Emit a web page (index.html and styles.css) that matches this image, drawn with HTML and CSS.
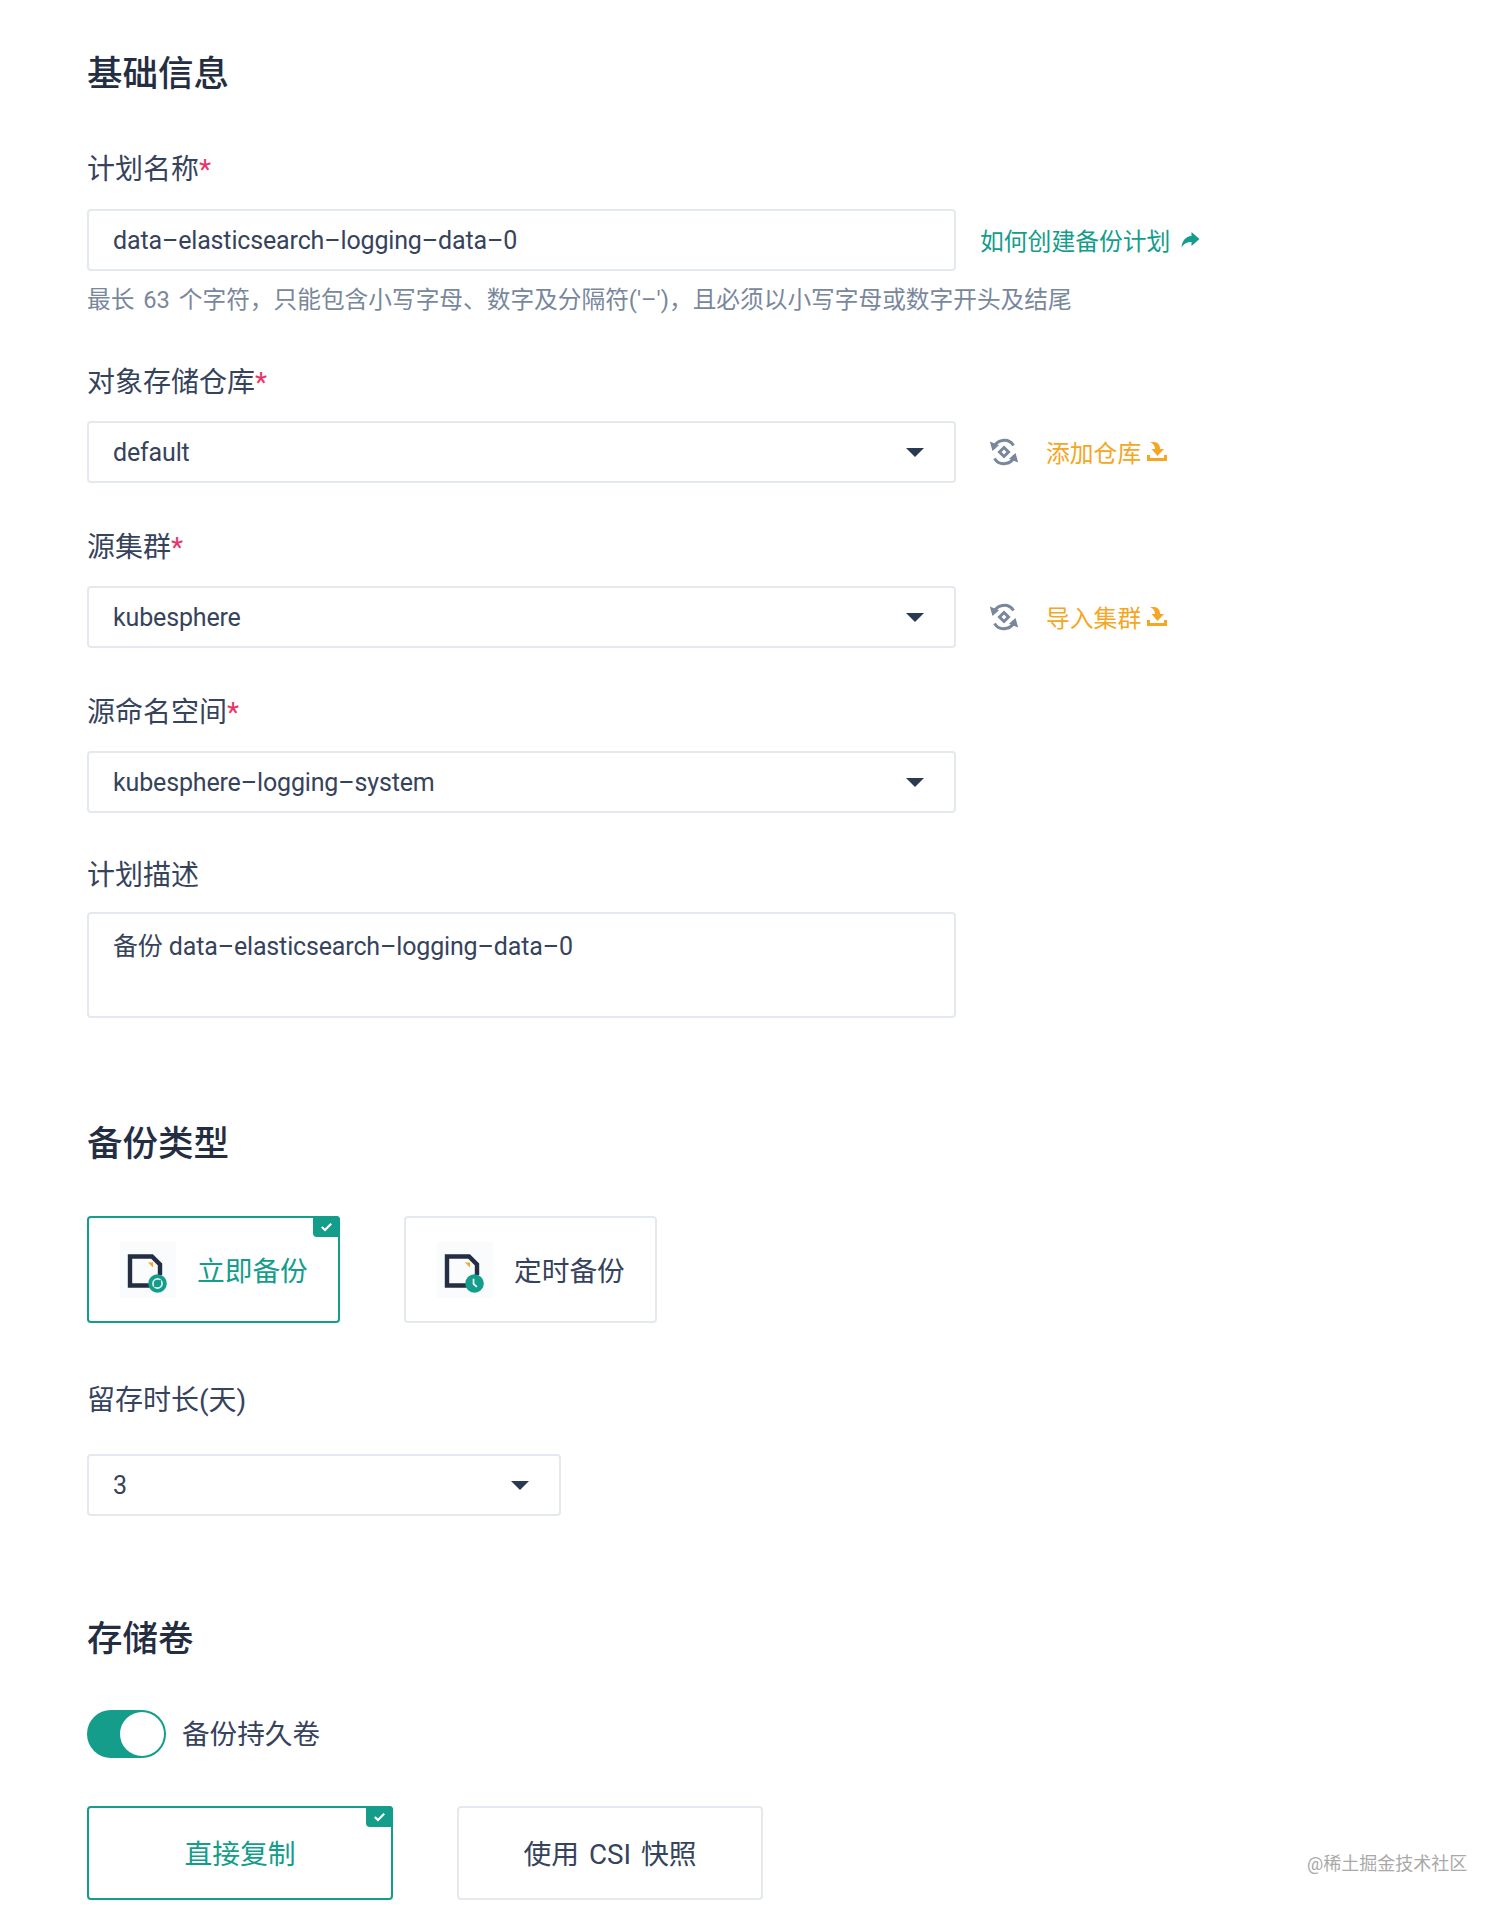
FILE: index.html
```html
<!DOCTYPE html>
<html lang="zh">
<head>
<meta charset="utf-8">
<title>备份计划</title>
<link rel="stylesheet" href="styles.css">
</head>
<body>
<svg class="defs" width="0" height="0" aria-hidden="true">
  <symbol id="i-refresh" viewBox="0 0 30 30">
    <path d="M4.500 11.500A11 11 0 0 1 24.500 8.500" fill="none" stroke="currentColor" stroke-width="3"/>
    <path d="M25.500 18.500A11 11 0 0 1 5.500 21.500" fill="none" stroke="currentColor" stroke-width="3"/>
    <path d="M.8 4.500 10 8.200 3.500 14Z" fill="currentColor"/>
    <path d="M29.200 25.500 20 21.800 26.500 16Z" fill="currentColor"/>
    <path d="M15 10.500 19.500 15 15 19.500 10.500 15Z" fill="none" stroke="currentColor" stroke-width="3"/>
  </symbol>
  <symbol id="i-down" viewBox="0 0 20 20">
    <path d="M3 0H7C11 0 13 3 13 7H17L10.500 14 4.500 7H8C8 4 6.500 1.500 3 0Z" fill="currentColor"/>
    <path d="M0 13H3V16H17V13H20V19H0Z" fill="currentColor"/>
  </symbol>
  <symbol id="i-check" viewBox="0 0 12 10">
    <path d="M1.300 5 4.500 8 10.700 1.800" fill="none" stroke="#fff" stroke-width="2.200"/>
  </symbol>
  <symbol id="i-doc" viewBox="0 0 56 56">
    <path d="M34 43.500H10V14.500H32L40 22.500V33" fill="none" stroke="#242e42" stroke-width="4.400"/>
    <path d="M28 20.500H33L33 25.500Z" fill="#f5a623"/>
  </symbol>
</svg>

<main class="page">
  <h2 class="title">基础信息</h2>

  <label class="label label-first">计划名称<span class="req">*</span></label>
  <div class="row">
    <div class="box">data–elasticsearch–logging–data–0</div>
    <a class="help"><span class="lift">如何创建备份计划</span>
      <svg class="share" viewBox="0 0 20 18"><path d="M11.500 1 19.500 8 11.500 15V11C7 11 4 12.500 1.500 16.500 2 10 5.500 5.500 11.500 5Z" fill="currentColor"/></svg>
    </a>
  </div>
  <p class="hint">最长 63 个字符，只能包含小写字母、数字及分隔符('–')，且必须以小写字母或数字开头及结尾</p>

  <label class="label label-store">对象存储仓库<span class="req">*</span></label>
  <div class="row">
    <div class="box select"><span>default</span><i class="caret"></i></div>
    <svg class="refresh"><use href="#i-refresh"/></svg>
    <a class="add"><span class="lift">添加仓库</span><svg class="down"><use href="#i-down"/></svg></a>
  </div>

  <label class="label label-next">源集群<span class="req">*</span></label>
  <div class="row">
    <div class="box select"><span>kubesphere</span><i class="caret"></i></div>
    <svg class="refresh"><use href="#i-refresh"/></svg>
    <a class="add"><span class="lift">导入集群</span><svg class="down"><use href="#i-down"/></svg></a>
  </div>

  <label class="label label-next">源命名空间<span class="req">*</span></label>
  <div class="row">
    <div class="box select"><span>kubesphere–logging–system</span><i class="caret"></i></div>
  </div>

  <label class="label label-desc">计划描述</label>
  <div class="box area">备份 data–elasticsearch–logging–data–0</div>

  <h2 class="title title-gap">备份类型</h2>
  <div class="cards">
    <div class="card on">
      <span class="tile">
        <svg class="doc"><use href="#i-doc"/></svg>
        <svg class="dot" viewBox="0 0 20 20"><circle cx="10" cy="10" r="9.800" fill="#139d8a"/><circle cx="10" cy="10" r="4.800" fill="none" stroke="#fff" stroke-width="1.800" opacity=".85"/><path d="M6.500 13.500 13.500 6.500" stroke="#139d8a" stroke-width="1.600"/></svg>
      </span>
      <span class="lift">立即备份</span>
      <span class="badge"><svg class="tick"><use href="#i-check"/></svg></span>
    </div>
    <div class="card">
      <span class="tile">
        <svg class="doc"><use href="#i-doc"/></svg>
        <svg class="dot" viewBox="0 0 20 20"><circle cx="10" cy="10" r="9.800" fill="#139d8a"/><path d="M9 5V10.500L12.500 13.500" fill="none" stroke="#fff" stroke-width="1.800"/></svg>
      </span>
      <span class="lift">定时备份</span>
    </div>
  </div>

  <label class="label label-ret">留存时长(天)</label>
  <div class="box select short"><span>3</span><i class="caret"></i></div>

  <h2 class="title title-gap2">存储卷</h2>
  <div class="toggle-row">
    <span class="toggle"><span class="knob"></span></span>
    <span class="toggle-text">备份持久卷</span>
  </div>
  <div class="modes">
    <div class="mode on"><span class="lift">直接复制</span><span class="badge"><svg class="tick"><use href="#i-check"/></svg></span></div>
    <div class="mode"><span class="lift spaced">使用 CSI 快照</span></div>
    <span class="mark">@稀土掘金技术社区</span>
  </div>
</main>
</body>
</html>
```

FILE: styles.css
```css
* { box-sizing: border-box; }
html, body { margin: 0; padding: 0; background: #fff; }
body {
  height: 1918px;
  overflow: hidden;
  color: #36435c;
  font-family: Roboto, "Noto Sans CJK SC", sans-serif;
}
.defs { position: absolute; }
.page { padding: 52px 0 0 87px; }

.title {
  margin: 0;
  height: 44px;
  font-size: 35.500px;
  line-height: 44px;
  font-weight: 500;
  color: #242e42;
}
.title-gap { margin-top: 104px; }
.title-gap2 { margin-top: 101px; }

.label {
  display: block;
  height: 36px;
  font-size: 28px;
  line-height: 36px;
  color: #36435c;
}
.label-first { margin: 56px 0 21px; }
.label-store { margin: 50px 0 20px; }
.label-next { margin: 47px 0 20px; }
.label-desc { margin: 45px 0 18px; }
.label-ret { margin: 60px 0 35px; }
.req { color: #ea3468; }

.row { display: flex; align-items: center; }
.box {
  display: flex;
  align-items: center;
  width: 869px;
  height: 62px;
  padding: 0 24px;
  border: 2px solid #e3e9ef;
  border-radius: 4px;
  background: #fff;
  font-size: 25px;
  letter-spacing: -0.15px;
  color: #36435c;
}
.select { justify-content: space-between; padding-right: 30px; }
.short { width: 474px; }
.area { height: 106px; align-items: flex-start; padding-top: 18px; line-height: 30px; }
.caret {
  width: 0;
  height: 0;
  border-left: 9px solid transparent;
  border-right: 9px solid transparent;
  border-top: 9px solid #2b3a50;
}

.help {
  display: flex;
  align-items: center;
  margin-left: 24px;
  font-size: 23.800px;
  color: #139d8a;
}
.lift { margin-bottom: 2px; }
.share { width: 20px; height: 18px; margin-left: 10px; }
.hint {
  margin: 14px 0 0;
  height: 30px;
  font-size: 23.700px;
  word-spacing: 3px;
  line-height: 30px;
  color: #79879c;
}
.refresh { width: 30px; height: 30px; margin-left: 33px; color: #79879c; }
.add {
  display: flex;
  align-items: center;
  margin-left: 27px;
  font-size: 23.800px;
  color: #f5a623;
}
.down { width: 20px; height: 20px; margin-left: 6px; }

.cards { display: flex; gap: 64px; margin-top: 50px; }
.card {
  position: relative;
  display: flex;
  align-items: center;
  gap: 21px;
  width: 253px;
  height: 107px;
  padding-left: 31px;
  border: 2px solid #e3e9ef;
  border-radius: 4px;
  background: #fff;
  font-size: 27.700px;
  color: #36435c;
}
.card.on, .mode.on { border-color: #139d8a; color: #139d8a; }
.tile {
  position: relative;
  display: block;
  flex: none;
  width: 56px;
  height: 56px;
  background: #f9fbfd;
}
.doc { display: block; width: 56px; height: 56px; }
.dot { position: absolute; left: 28px; top: 32px; width: 19px; height: 19px; }
.badge {
  position: absolute;
  top: -2px;
  right: -2px;
  display: flex;
  align-items: center;
  justify-content: center;
  width: 27px;
  height: 21px;
  border-radius: 0 4px 0 4px;
  background: #139d8a;
}
.tick { width: 13px; height: 10px; }

.toggle-row { display: flex; align-items: center; gap: 16px; margin-top: 49px; }
.toggle {
  display: block;
  width: 79px;
  height: 48px;
  padding: 2px;
  border-radius: 24px;
  background: #139d8a;
}
.knob {
  display: block;
  width: 44px;
  height: 44px;
  margin-left: 31px;
  border-radius: 50%;
  background: #fff;
}
.toggle-text { margin-bottom: 5px; font-size: 27.600px; color: #36435c; }

.modes { position: relative; display: flex; gap: 64px; margin-top: 48px; }
.mode {
  position: relative;
  display: flex;
  align-items: center;
  justify-content: center;
  width: 306px;
  height: 94px;
  border: 2px solid #e3e9ef;
  border-radius: 4px;
  background: #fff;
  font-size: 27.800px;
  color: #36435c;
}
.spaced { word-spacing: 3px; }
.mark {
  position: absolute;
  left: 1220px;
  top: 46px;
  font-size: 18px;
  line-height: 24px;
  color: #a9a9a9;
}
```
